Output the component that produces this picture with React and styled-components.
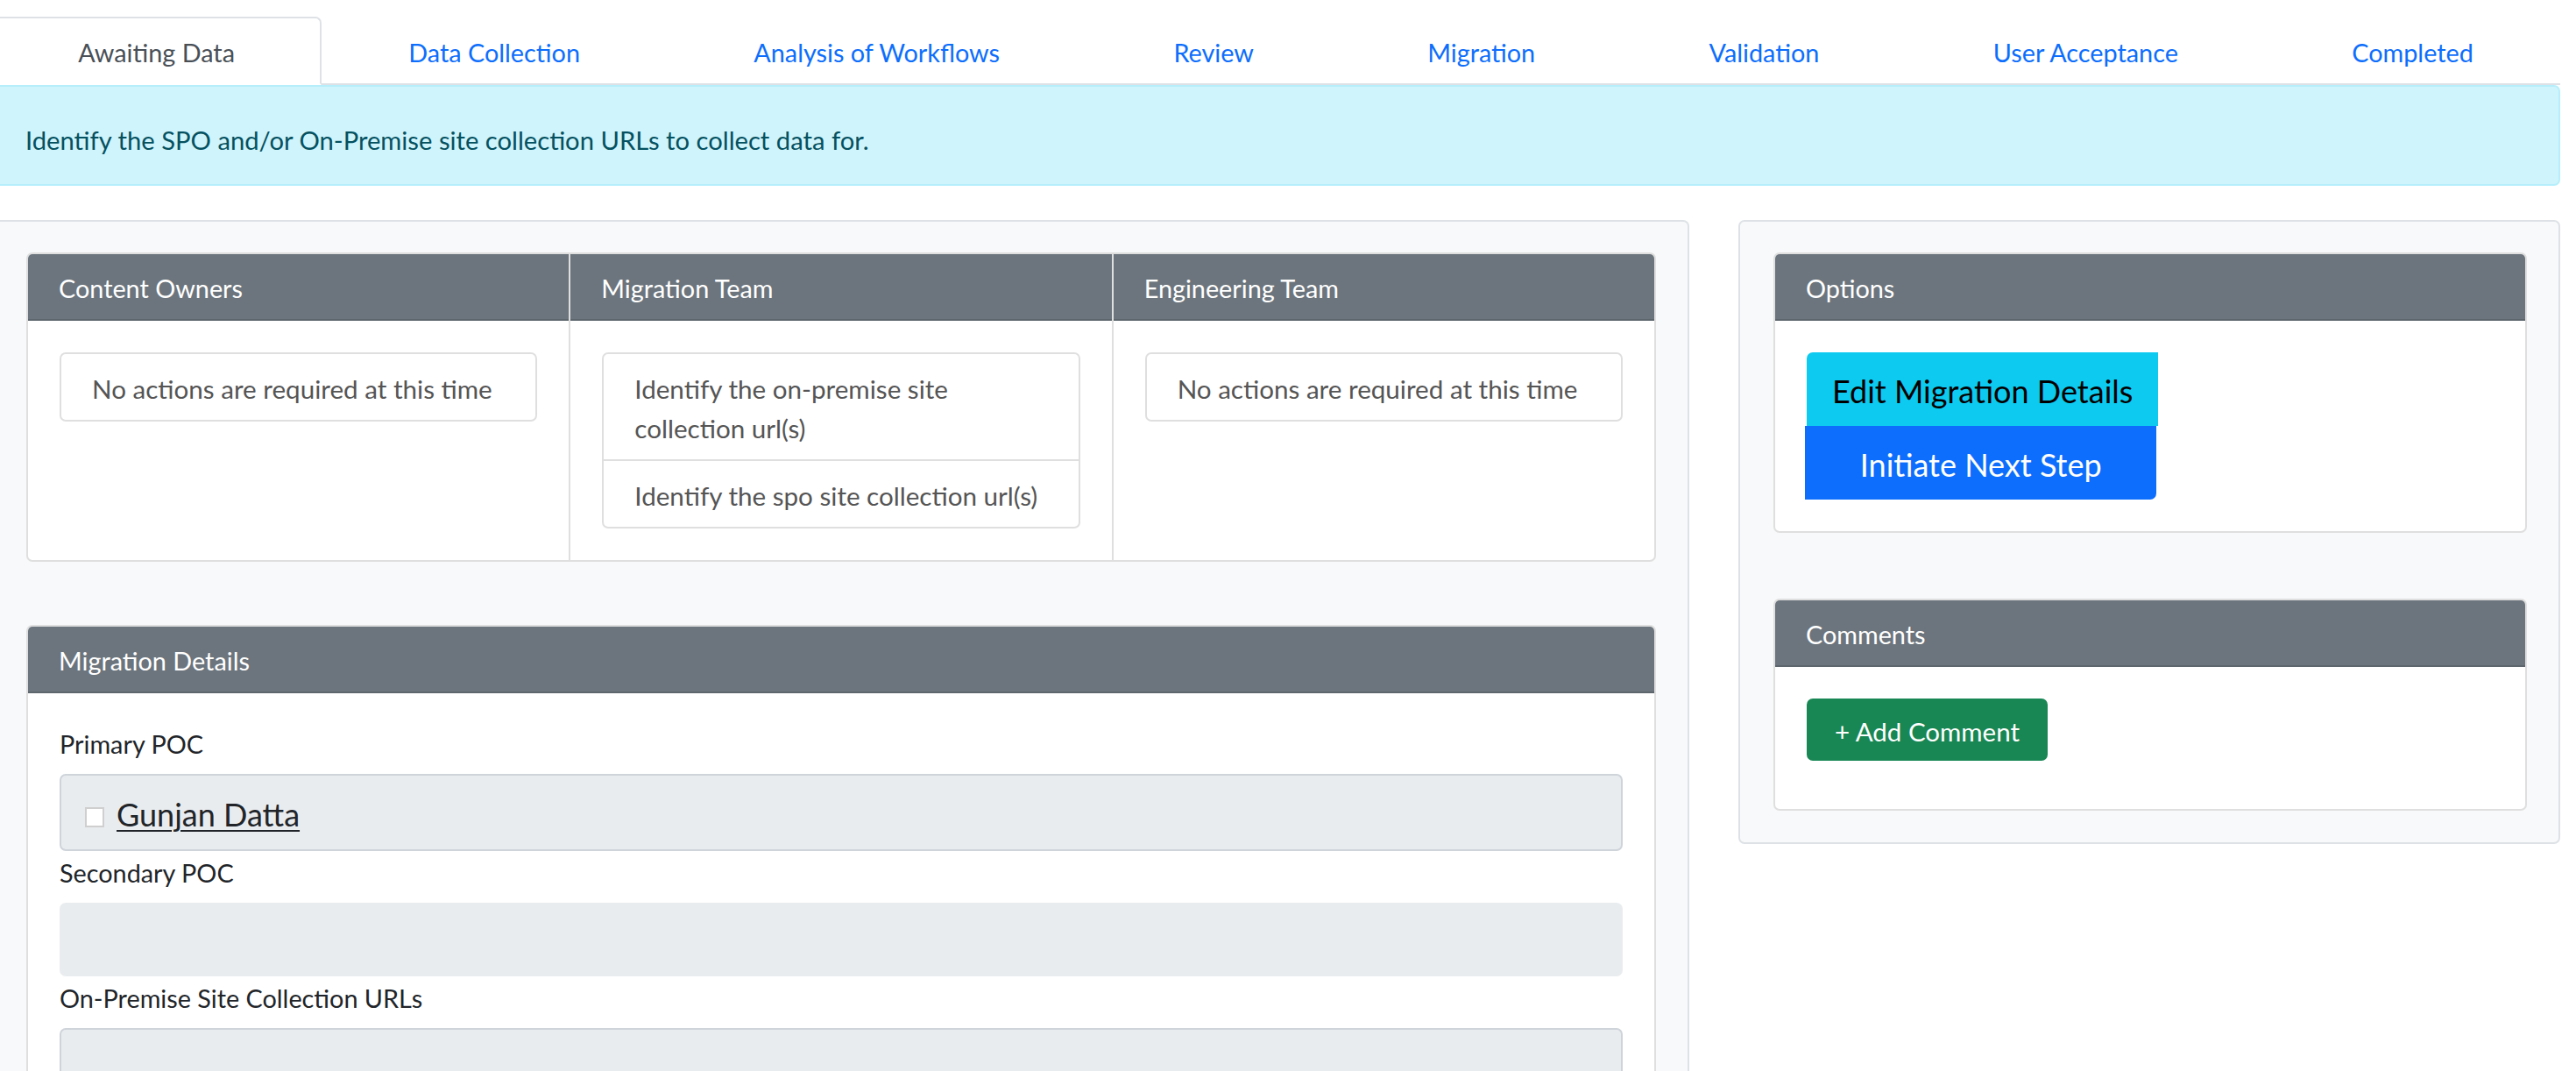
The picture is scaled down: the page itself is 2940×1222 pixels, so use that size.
import React from 'react';
import styled, { createGlobalStyle, css } from 'styled-components';

const GlobalStyle = createGlobalStyle`
  *, *::before, *::after { box-sizing: border-box; }
  html, body { margin: 0; padding: 0; background: #fff; }
  body {
    font-family: Lato, "Open Sans", "Liberation Sans", sans-serif;
    font-size: 28.8px;
    line-height: 45px;
    color: #212529;
  }
`;

const Page = styled.div`
  margin-left: -10px;
  width: 2932px;
`;

const Tabs = styled.nav`
  display: flex;
  padding-top: 19px;
  border-bottom: 2px solid #dee2e6;
`;

const Tab = styled.a`
  flex: 1 1 auto;
  text-align: center;
  white-space: nowrap;
  padding: 17px 30px 12px;
  margin-bottom: -2px;
  border: 2px solid transparent;
  border-radius: 7px 7px 0 0;
  color: #0d6efd;
  text-decoration: none;
  cursor: pointer;
  ${(p) =>
    p.$active &&
    css`
      color: #495057;
      background: #fff;
      border-color: #dee2e6 #dee2e6 #fff;
    `}
`;

const Alert = styled.div`
  margin-bottom: 39px;
  padding: 38px 37px 28px;
  font-size: 29.2px;
  border: 2px solid #b6effb;
  border-radius: 7px;
  background: #cff4fc;
  color: #055160;
`;

const Columns = styled.div`
  display: grid;
  grid-template-columns: 1938px 938px;
  column-gap: 56px;
  align-items: start;
`;

const Panel = styled.section`
  display: flex;
  flex-direction: column;
  gap: ${(p) => p.$gap || 72}px;
  padding: 35px 36px 36px 38px;
  background: #f8f9fa;
  border: 2px solid #dee2e6;
  border-radius: 7px;
`;

const Card = styled.div`
  background: #fff;
  border: 2px solid rgba(0, 0, 0, 0.125);
  border-radius: 7px;
  overflow: hidden;
`;

const CardGroup = styled.div`
  display: flex;
`;

const GroupCard = styled(Card)`
  flex: 1 1 0;
  border-radius: 0;
  & + & {
    border-left: 0;
  }
  &:first-child {
    border-radius: 7px 0 0 7px;
  }
  &:last-child {
    border-radius: 0 7px 7px 0;
  }
`;

const CardHeader = styled.div`
  padding: 17px 35px 12px;
  background: #6c757d;
  color: #fff;
  border-bottom: 2px solid rgba(0, 0, 0, 0.125);
`;

const CardBody = styled.div`
  padding: 36px 36px ${(p) => p.$bottom || 36}px;
`;

const ListGroup = styled.ul`
  display: flex;
  flex-direction: column;
  margin: 0;
  padding: 0;
  list-style: none;
`;

const ListItem = styled.li`
  padding: 17px 35px 13px;
  font-size: 29.6px;
  border: 2px solid rgba(0, 0, 0, 0.125);
  color: #555;
  & + & {
    border-top: 0;
  }
  &:first-child {
    border-top-left-radius: 7px;
    border-top-right-radius: 7px;
  }
  &:last-child {
    border-bottom-left-radius: 7px;
    border-bottom-right-radius: 7px;
  }
`;

const FieldLabel = styled.div`
  margin-bottom: 11px;
  color: #212529;
`;

const Field = styled.div`
  display: flex;
  align-items: center;
  gap: 14px;
  min-height: 84px;
  margin-bottom: 3px;
  padding: 16px 27px 12px;
  background: #e9ecef;
  border: 2px solid ${(p) => (p.$borderless ? '#e9ecef' : '#ced4da')};
  border-radius: 7px;
`;

const Avatar = styled.span`
  flex: none;
  width: 22px;
  height: 23px;
  margin-top: 6px;
  background: #fff;
  border: 2px solid #cfcfcf;
`;

const PersonLink = styled.a`
  font-size: 36px;
  line-height: 56px;
  color: #212529;
  text-decoration: underline;
  text-decoration-thickness: 2px;
  text-underline-offset: 4px;
`;

const ButtonStack = styled.div`
  display: inline-flex;
  flex-direction: column;
  align-items: stretch;
`;

const StackButton = styled.button`
  font-family: inherit;
  font-size: 36px;
  line-height: 56px;
  padding: 14px 27px 10px;
  border: 2px solid transparent;
  cursor: pointer;
  text-align: center;
  ${(p) =>
    p.$variant === 'info'
      ? css`
          background: #0dcaf0;
          border-color: #0dcaf0;
          color: #000;
          border-radius: 7px 0 0 0;
        `
      : css`
          background: #0d6efd;
          border-color: #0d6efd;
          color: #fff;
          border-radius: 0 0 7px 0;
          margin-left: -2px;
          margin-right: 2px;
        `}
`;

const SuccessButton = styled.button`
  display: inline-block;
  margin-bottom: 18px;
  padding: 13px 30px 9px;
  font-family: inherit;
  font-size: 29.5px;
  line-height: 45px;
  color: #fff;
  background: #198754;
  border: 2px solid #198754;
  border-radius: 7px;
  cursor: pointer;
`;

const tabs = [
  'Awaiting Data',
  'Data Collection',
  'Analysis of Workflows',
  'Review',
  'Migration',
  'Validation',
  'User Acceptance',
  'Completed',
];

const teams = [
  { name: 'Content Owners', items: ['No actions are required at this time'] },
  {
    name: 'Migration Team',
    items: ['Identify the on-premise site collection url(s)', 'Identify the spo site collection url(s)'],
  },
  { name: 'Engineering Team', items: ['No actions are required at this time'] },
];

export default function App() {
  return (
    <>
      <GlobalStyle />
      <Page>
        <Tabs>
          {tabs.map((t, i) => (
            <Tab key={t} $active={i === 0}>
              {t}
            </Tab>
          ))}
        </Tabs>
        <Alert>Identify the SPO and/or On-Premise site collection URLs to collect data for.</Alert>
        <Columns>
          <Panel>
            <CardGroup>
              {teams.map((team) => (
                <GroupCard key={team.name}>
                  <CardHeader>{team.name}</CardHeader>
                  <CardBody>
                    <ListGroup>
                      {team.items.map((it) => (
                        <ListItem key={it}>{it}</ListItem>
                      ))}
                    </ListGroup>
                  </CardBody>
                </GroupCard>
              ))}
            </CardGroup>
            <Card>
              <CardHeader>Migration Details</CardHeader>
              <CardBody>
                <FieldLabel>Primary POC</FieldLabel>
                <Field>
                  <Avatar />
                  <PersonLink>Gunjan Datta</PersonLink>
                </Field>
                <FieldLabel>Secondary POC</FieldLabel>
                <Field $borderless />
                <FieldLabel>On-Premise Site Collection URLs</FieldLabel>
                <Field />
              </CardBody>
            </Card>
          </Panel>
          <Panel $gap={75}>
            <Card>
              <CardHeader>Options</CardHeader>
              <CardBody>
                <ButtonStack>
                  <StackButton $variant="info">Edit Migration Details</StackButton>
                  <StackButton $variant="primary">Initiate Next Step</StackButton>
                </ButtonStack>
              </CardBody>
            </Card>
            <Card>
              <CardHeader>Comments</CardHeader>
              <CardBody $bottom={37}>
                <SuccessButton>+ Add Comment</SuccessButton>
              </CardBody>
            </Card>
          </Panel>
        </Columns>
      </Page>
    </>
  );
}
